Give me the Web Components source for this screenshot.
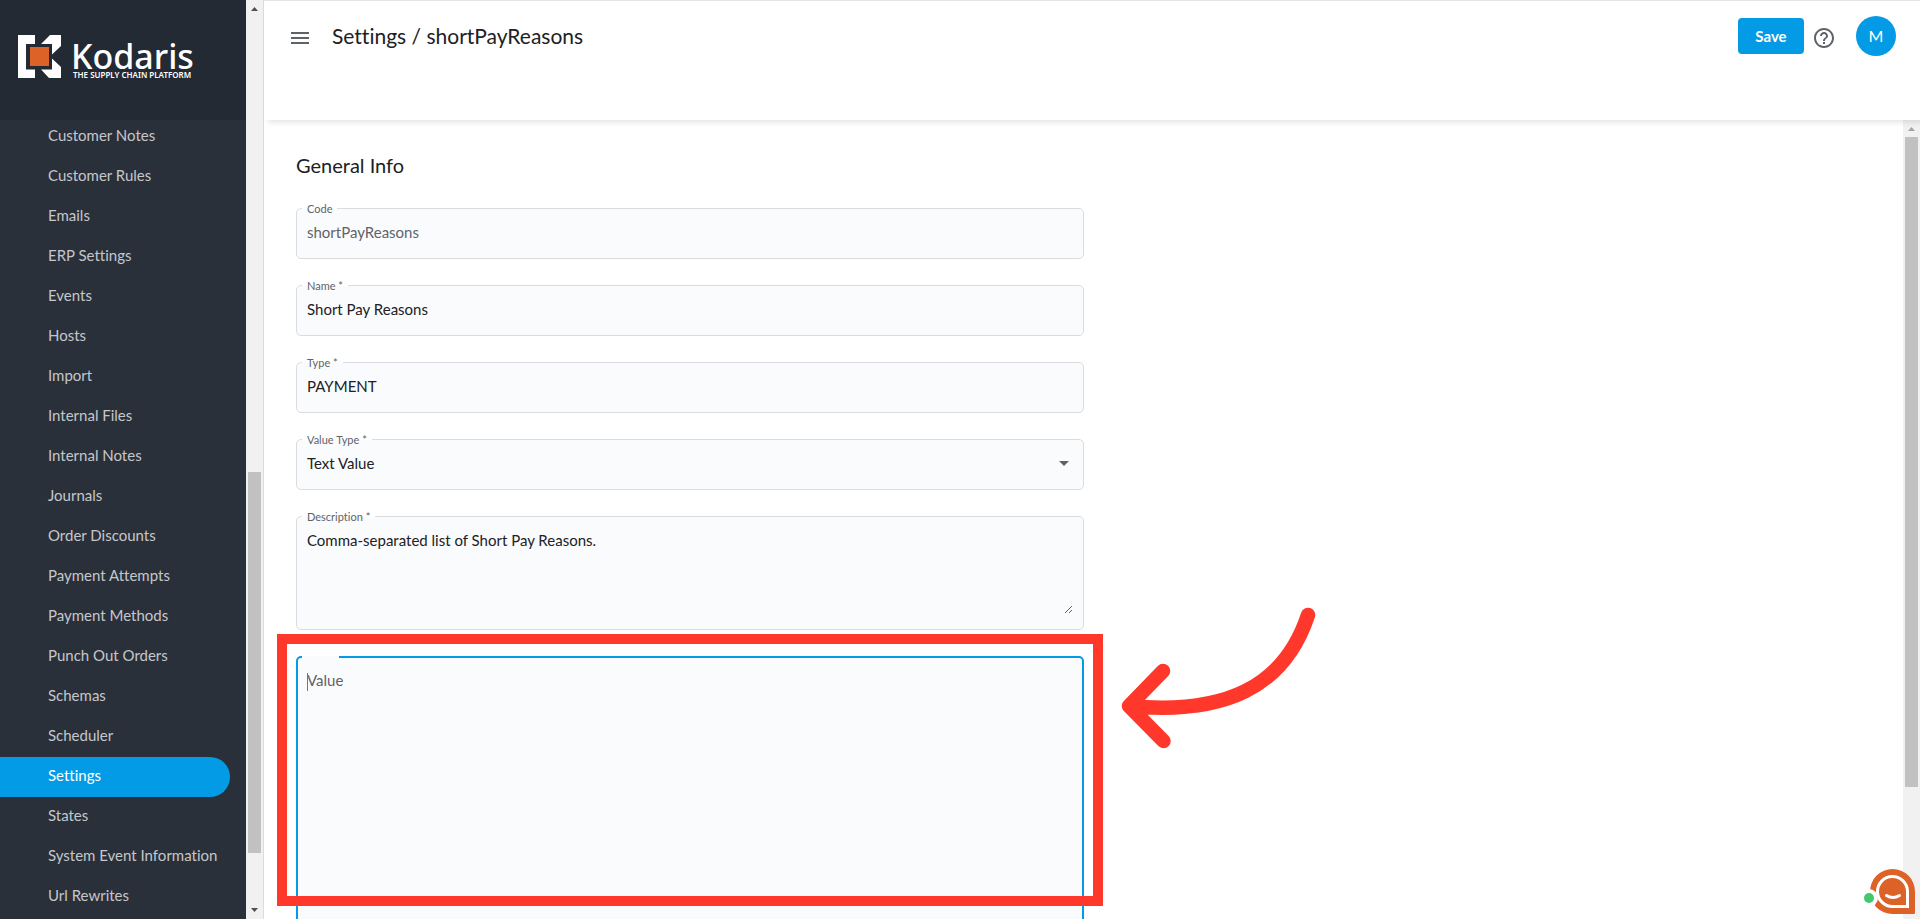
<!DOCTYPE html>
<html lang="en">
<head>
<meta charset="utf-8">
<title>Settings / shortPayReasons</title>
<style>
    :root {
        --color-primary: #039be5;
        --color-text: #202124;
        --color-text-light: #5f6368;
        --color-border: #dadce0;
        --color-field: #fafbfd;
        --color-nav: #2a303a;
        --color-nav-dark: #232a34;
        --color-mark: #ff382b;
    }
    body {
        margin: 0;
        font: 15px/20px Lato, sans-serif;
        font-variant-ligatures: none;
        color: var(--color-text);
        background: #fff;
    }
</style>
</head>
<body>

<admin-app>
    <side-nav slot="nav">
        <nav-item>Customer Notes</nav-item>
        <nav-item>Customer Rules</nav-item>
        <nav-item>Emails</nav-item>
        <nav-item>ERP Settings</nav-item>
        <nav-item>Events</nav-item>
        <nav-item>Hosts</nav-item>
        <nav-item>Import</nav-item>
        <nav-item>Internal Files</nav-item>
        <nav-item>Internal Notes</nav-item>
        <nav-item>Journals</nav-item>
        <nav-item>Order Discounts</nav-item>
        <nav-item>Payment Attempts</nav-item>
        <nav-item>Payment Methods</nav-item>
        <nav-item>Punch Out Orders</nav-item>
        <nav-item>Schemas</nav-item>
        <nav-item>Scheduler</nav-item>
        <nav-item active>Settings</nav-item>
        <nav-item>States</nav-item>
        <nav-item>System Event Information</nav-item>
        <nav-item>Url Rewrites</nav-item>
    </side-nav>
    <page-header slot="header" initial="M">Settings / shortPayReasons</page-header>
    <settings-form>
        <span slot="title">General Info</span>
        <form-field label="Code" value="shortPayReasons" disabled></form-field>
        <form-field label="Name *" value="Short Pay Reasons"></form-field>
        <form-field label="Type *" value="PAYMENT"></form-field>
        <form-field label="Value Type *" value="Text Value" type="select"></form-field>
        <form-field label="Description *" value="Comma-separated list of Short Pay Reasons." type="textarea"></form-field>
        <call-out>
            <form-field label="Value" type="textarea" active></form-field>
        </call-out>
    </settings-form>
    <chat-launcher slot="chat"></chat-launcher>
</admin-app>

<template id="template-app">
    <slot name="nav"></slot>
    <scroll-bar class="nav-scroll" style="--before: 455; --thumb: 381; --after: 49"></scroll-bar>
    <div class="page">
        <slot name="header"></slot>
        <div class="body">
            <main><slot></slot></main>
            <scroll-bar muted style="--before: 0; --thumb: 650; --after: 115"></scroll-bar>
        </div>
    </div>
    <slot name="chat"></slot>
    <style>
        :host {
            display: flex;
            height: 100vh;
            overflow: hidden;
        }
        .nav-scroll {
            border-right: 1px solid #dcdcdc;
        }
        .page {
            flex: 1;
            min-width: 0;
            display: flex;
            flex-direction: column;
        }
        .body {
            flex: 1;
            min-height: 0;
            display: flex;
        }
        main {
            flex: 1;
            min-width: 0;
            overflow: hidden;
        }
    </style>
</template>

<template id="template-side-nav">
    <header>
        <svg width="43" height="43" viewBox="0 0 43 43" aria-hidden="true">
            <path fill="#fff" d="M0 0H17V9H8V34.500H17V43H0ZM23 9L32 0H43V11L34 19.500V9ZM23 34.500H34V23.500L43 32V43H31Z"/>
            <path fill="#dd6228" d="M12 12H31V31H12Z"/>
        </svg>
        <div>
            <b>Kodaris</b>
            <small>THE SUPPLY CHAIN PLATFORM</small>
        </div>
    </header>
    <nav><slot></slot></nav>
    <style>
        :host {
            flex: 0 0 246px;
            display: flex;
            flex-direction: column;
            background: var(--color-nav);
        }
        header {
            flex: 0 0 120px;
            box-sizing: border-box;
            display: flex;
            align-items: flex-start;
            gap: 10px;
            padding: 35px 0 0 18px;
            color: #fff;
            background: var(--color-nav-dark);
            z-index: 1;
        }
        header div {
            display: flex;
            flex-direction: column;
            padding-top: 5px;
            font-family: "Noto Sans", sans-serif;
            white-space: nowrap;
        }
        b {
            font-size: 34px;
            font-weight: 500;
            line-height: 32px;
        }
        small {
            padding-left: 2px;
            font-size: 8px;
            font-weight: 600;
            line-height: 6px;
        }
        /* scrolled to its end */
        nav {
            flex: 1;
            min-height: 0;
            display: flex;
            flex-direction: column;
            justify-content: flex-end;
            padding-bottom: 2px;
        }
    </style>
</template>

<template id="template-nav-item">
    <a href="#"><slot></slot></a>
    <style>
        :host {
            display: block;
            flex: none;
            padding-right: 16px;
        }
        a {
            display: block;
            padding: 8px 0 12px 48px;
            border-radius: 0 20px 20px 0;
            color: #c5c7ca;
            text-decoration: none;
            white-space: nowrap;
        }
        :host([active]) a {
            color: #fff;
            background: var(--color-primary);
        }
    </style>
</template>

<template id="template-page-header">
    <button class="icon" aria-label="Menu">
        <svg width="18" height="12" viewBox="0 0 18 12"><path fill="currentColor" d="M0 0H18V2H0ZM0 5H18V7H0ZM0 10H18V12H0Z"/></svg>
    </button>
    <h1><slot></slot></h1>
    <button class="save">Save</button>
    <button class="icon" aria-label="Help">
        <svg width="20" height="20" viewBox="2 2 20 20"><path fill="currentColor" d="M11 18h2v-2h-2v2zm1-16C6.480 2 2 6.480 2 12s4.480 10 10 10 10-4.480 10-10S17.520 2 12 2zm0 18c-4.410 0-8-3.590-8-8s3.590-8 8-8 8 3.590 8 8-3.590 8-8 8zm0-14c-2.210 0-4 1.790-4 4h2c0-1.100.9-2 2-2s2 .9 2 2c0 2-3 1.750-3 5h2c0-2.250 3-2.500 3-5 0-2.210-1.790-4-4-4z"/></svg>
    </button>
    <button class="avatar"></button>
    <style>
        :host {
            position: relative;
            z-index: 1;
            flex: 0 0 120px;
            box-sizing: border-box;
            display: flex;
            align-items: flex-start;
            padding: 11px 24px 0 27px;
            border-top: 1px solid #e4e4e4;
            background: #fff;
            box-shadow: 4px 2px 6px rgba(0, 0, 0, .12);
        }
        h1 {
            flex: 1;
            margin: 0 0 0 23px;
            font-size: 21px;
            font-weight: 400;
            line-height: 48px;
        }
        button {
            border: 0;
            padding: 0;
            font: inherit;
            color: #fff;
            background: var(--color-primary);
        }
        .icon {
            display: flex;
            align-items: center;
            height: 52px;
            color: var(--color-text-light);
            background: none;
        }
        .save {
            width: 66px;
            height: 36px;
            margin: 6px 10px 0 0;
            border-radius: 4px;
            font-weight: 700;
        }
        .avatar {
            width: 40px;
            height: 40px;
            margin: 4px 0 0 22px;
            border-radius: 50%;
            font-size: 16px;
        }
    </style>
</template>

<template id="template-settings-form">
    <h2><slot name="title"></slot></h2>
    <form><slot></slot></form>
    <style>
        :host {
            display: block;
            box-sizing: border-box;
            width: 52%;
            min-width: 320px;
            padding: 33px 32px 0;
        }
        h2 {
            margin: 0 0 31px;
            font-size: 20px;
            font-weight: 400;
            line-height: 24px;
        }
        form {
            display: flex;
            flex-direction: column;
            gap: 26px;
        }
    </style>
</template>

<template id="template-form-field">
    <div class="box">
        <label for="control"></label>
    </div>
    <style>
        :host {
            display: block;
        }
        .box {
            position: relative;
            display: flex;
            border: 1px solid var(--color-border);
            border-radius: 5px;
            padding: 13px 10px 16px;
            background: var(--color-field);
        }
        label {
            position: absolute;
            top: -6px;
            left: 5px;
            padding: 0 5px;
            font-size: 11px;
            line-height: 12px;
            color: var(--color-text-light);
            background: linear-gradient(#fff 50%, var(--color-field) 50%);
        }
        input, select, textarea {
            flex: 1;
            min-width: 0;
            height: 20px;
            margin: 0;
            padding: 0;
            border: 0;
            outline: 0;
            font: inherit;
            color: var(--color-text);
            background: none;
            appearance: none;
        }
        input:disabled {
            color: var(--color-text-light);
        }
        textarea {
            height: 84px;
            resize: vertical;
        }
        .box.textarea {
            padding-bottom: 15px;
        }
        svg {
            align-self: center;
            margin-right: 4px;
            color: var(--color-text-light);
        }
        /* focused and empty: the label rests on the first line */
        :host([active]) .box {
            border: 2px solid var(--color-primary);
            padding: 12px 9px;
        }
        :host([active]) textarea {
            height: 360px;
        }
        :host([active]) label {
            top: 12px;
            left: 9px;
            padding: 0;
            font-size: 15px;
            line-height: 20px;
            background: none;
        }
        .notch {
            position: absolute;
            top: -2px;
            left: 4px;
            width: 37px;
            height: 2px;
            background: var(--color-field);
        }
        .caret {
            position: absolute;
            top: 15px;
            left: 9px;
            width: 1px;
            height: 18px;
            background: var(--color-primary);
        }
    </style>
</template>

<template id="template-call-out">
    <slot></slot>
    <div class="frame"></div>
    <svg width="200" height="160" viewBox="0 0 200 160" fill="none" stroke="currentColor" stroke-linecap="round" stroke-linejoin="round" aria-hidden="true">
        <path stroke-width="14.500" d="M188 15C164 88 104 115 9 106M43 71L9 106L43.500 141"/>
    </svg>
    <style>
        :host {
            position: relative;
            display: block;
            color: var(--color-mark);
        }
        .frame {
            position: absolute;
            top: -22px;
            left: -19px;
            right: -19px;
            height: 252px;
            border: 10px solid;
            pointer-events: none;
        }
        svg {
            position: absolute;
            top: -56px;
            left: calc(100% + 36px);
        }
    </style>
</template>

<template id="template-scroll-bar">
    <svg width="17" height="17" viewBox="0 0 17 17"><path fill="currentColor" d="M5 11L8.500 7L12 11Z"/></svg>
    <span class="before"></span>
    <span class="thumb"></span>
    <span class="after"></span>
    <svg width="17" height="17" viewBox="0 0 17 17"><path fill="currentColor" d="M5 6L8.500 10L12 6Z"/></svg>
    <style>
        :host {
            flex: none;
            display: flex;
            flex-direction: column;
            width: 17px;
            color: #505050;
            background: #f1f1f1;
        }
        :host([muted]) {
            color: #a3a3a3;
        }
        svg {
            flex: none;
        }
        .before { flex: var(--before) 0 0; }
        .after { flex: var(--after) 0 0; }
        .thumb {
            flex: var(--thumb) 0 0;
            margin: 0 2px;
            background: #c1c1c1;
        }
    </style>
</template>

<template id="template-chat">
    <button aria-label="Chat">
        <svg width="56" height="49" viewBox="0 6 56 49" fill="none">
            <path fill="#dd6228" d="M54 54H32.500A22.500 22.500 0 1 1 55 31.500V53Q55 54 54 54Z"/>
            <path stroke="#fff" stroke-width="3" d="M47.500 46.500H33A15 15 0 1 1 47.500 31.500Z"/>
            <path stroke="#fff" stroke-width="3" stroke-linecap="round" d="M26.500 35.500Q33 39.500 39.500 35.500"/>
            <circle cx="9" cy="38" r="9" fill="#fff"/>
            <circle cx="9" cy="38" r="5" fill="#43c96b"/>
        </svg>
    </button>
    <style>
        :host {
            position: fixed;
            right: 4px;
            bottom: 4px;
            z-index: 2;
        }
        button {
            display: block;
            border: 0;
            padding: 0;
            background: none;
        }
        svg {
            display: block;
        }
    </style>
</template>

<script>
    const define = (name, templateId, render) => {
        customElements.define(name, class extends HTMLElement {
            constructor() {
                super();
                const template = document.getElementById(templateId).content;
                this.attachShadow({ mode: 'open' }).appendChild(template.cloneNode(true));
            }
            connectedCallback() {
                if (render) render(this, this.shadowRoot);
            }
        });
    };

    const CARET = '<svg width="10" height="5" viewBox="0 0 10 5" aria-hidden="true"><path fill="currentColor" d="M0 0H10L5 5Z"/></svg>';

    define('scroll-bar', 'template-scroll-bar');
    define('nav-item', 'template-nav-item');
    define('side-nav', 'template-side-nav');
    define('page-header', 'template-page-header', (host, root) => {
        root.querySelector('.avatar').textContent = host.getAttribute('initial');
    });
    define('form-field', 'template-form-field', (host, root) => {
        const type = host.getAttribute('type') || 'input';
        const value = host.getAttribute('value') || '';
        const box = root.querySelector('.box');
        const control = document.createElement(type);
        control.id = 'control';
        control.disabled = host.hasAttribute('disabled');
        if (type === 'select') {
            control.add(new Option(value));
        } else {
            control.value = value;
        }
        root.querySelector('label').textContent = host.getAttribute('label');
        box.classList.add(type);
        box.appendChild(control);
        if (type === 'select') box.insertAdjacentHTML('beforeend', CARET);
        if (host.hasAttribute('active')) {
            box.insertAdjacentHTML('beforeend', '<span class="notch"></span><span class="caret"></span>');
        }
    });
    define('call-out', 'template-call-out');
    define('settings-form', 'template-settings-form');
    define('chat-launcher', 'template-chat');
    define('admin-app', 'template-app');
</script>
</body>
</html>
